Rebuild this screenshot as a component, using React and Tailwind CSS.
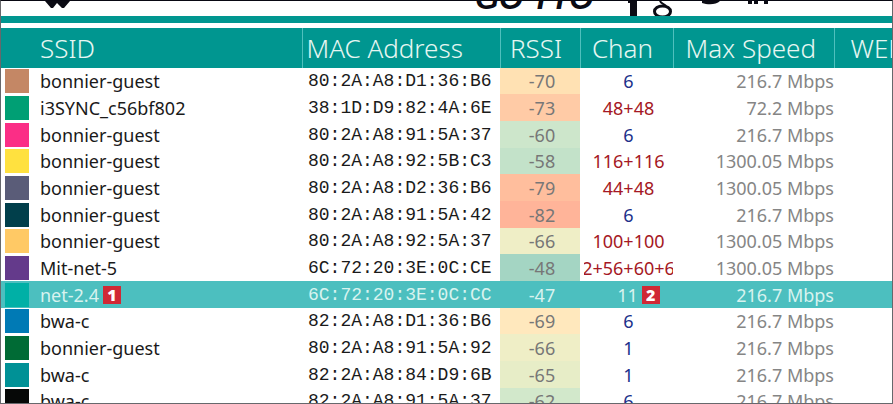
const SANS = "font-['Noto_Sans','Open_Sans',sans-serif]";

const rows = [
  { id: 1, name: "bonnier-guest", swatch: "bg-[#c48765]", mac: "80:2A:A8:D1:36:B6", rssi: -70, heat: "bg-[#ffe1b3]", chan: "6", speed: "216.7 Mbps" },
  { id: 2, name: "i3SYNC_c56bf802", swatch: "bg-[#009f74]", mac: "38:1D:D9:82:4A:6E", rssi: -73, heat: "bg-[#ffcba6]", chan: "48+48", speed: "72.2 Mbps" },
  { id: 3, name: "bonnier-guest", swatch: "bg-[#fb2e86]", mac: "80:2A:A8:91:5A:37", rssi: -60, heat: "bg-[#cde6cb]", chan: "6", speed: "216.7 Mbps" },
  { id: 4, name: "bonnier-guest", swatch: "bg-[#ffe13f]", mac: "80:2A:A8:92:5B:C3", rssi: -58, heat: "bg-[#c3e2c9]", chan: "116+116", speed: "1300.05 Mbps" },
  { id: 5, name: "bonnier-guest", swatch: "bg-[#5a5c78]", mac: "80:2A:A8:D2:36:B6", rssi: -79, heat: "bg-[#ffbe9d]", chan: "44+48", speed: "1300.05 Mbps" },
  { id: 6, name: "bonnier-guest", swatch: "bg-[#013f4b]", mac: "80:2A:A8:91:5A:42", rssi: -82, heat: "bg-[#ffb499]", chan: "6", speed: "216.7 Mbps" },
  { id: 7, name: "bonnier-guest", swatch: "bg-[#ffc965]", mac: "80:2A:A8:92:5A:37", rssi: -66, heat: "bg-[#efeec6]", chan: "100+100", speed: "1300.05 Mbps" },
  { id: 8, name: "Mit-net-5", swatch: "bg-[#643a8b]", mac: "6C:72:20:3E:0C:CE", rssi: -48, heat: "bg-[#a4d5c3]", chan: "52+56+60+64", speed: "1300.05 Mbps" },
  { id: 9, name: "net-2.4", swatch: "bg-[#00b0a6]", mac: "6C:72:20:3E:0C:CC", rssi: -47, heat: "", chan: "11", speed: "216.7 Mbps", selected: true },
  { id: 10, name: "bwa-c", swatch: "bg-[#007ab5]", mac: "82:2A:A8:D1:36:B6", rssi: -69, heat: "bg-[#ffe8bd]", chan: "6", speed: "216.7 Mbps" },
  { id: 11, name: "bonnier-guest", swatch: "bg-[#006b35]", mac: "80:2A:A8:91:5A:92", rssi: -66, heat: "bg-[#efeec6]", chan: "1", speed: "216.7 Mbps" },
  { id: 12, name: "bwa-c", swatch: "bg-[#009196]", mac: "82:2A:A8:84:D9:6B", rssi: -65, heat: "bg-[#e7edc7]", chan: "1", speed: "216.7 Mbps" },
  { id: 13, name: "bwa-c", swatch: "bg-[#060807]", mac: "82:2A:A8:91:5A:37", rssi: -62, heat: "bg-[#d2e8cb]", chan: "6", speed: "216.7 Mbps" },
];

function Marker({ children }) {
  return (
    <span className="flex h-[18px] w-[18px] shrink-0 items-center justify-center bg-[#d02835] font-['Open_Sans',sans-serif] text-base leading-none font-extrabold text-white">
      {children}
    </span>
  );
}

/* Lower edge of the banner: logo tip, title and the share icons. */
function Banner() {
  return (
    <header className="flex h-[15px] items-end overflow-hidden text-[#0b0b14]">
      <svg className="ml-11 h-[15px] w-[26px] shrink-0" viewBox="0 0 26 15" fill="currentColor" aria-hidden="true">
        <path d="M0 0H25L19 7H17L12 2L8 7H6Z" />
      </svg>
      <span className="mb-0.5 ml-[404px] shrink-0 font-['Liberation_Sans',sans-serif] text-[31px] leading-none font-bold whitespace-nowrap italic">
        GO TTO
      </span>
      <svg className="ml-[35px] h-[15px] w-[144px] shrink-0" viewBox="0 0 144 15" fill="currentColor" aria-hidden="true">
        <path d="M0 0H9V15H2V2H0Z" />
        <path d="M32 0C33 3 37 3 38 5" fill="none" stroke="currentColor" strokeWidth="2" />
        <ellipse cx="34.5" cy="10.5" rx="8" ry="5.5" fill="none" stroke="currentColor" strokeWidth="3" />
        <path d="M74 0H92C88 4 80 4 74 2Z" />
        <path d="M120 0H124V3H120ZM126 0H130V3H126ZM136 0H140V3H136Z" />
      </svg>
    </header>
  );
}

function NetworkRow({ row }) {
  const on = row.selected;
  const chanColor = on ? "text-[#d8f3ef]" : row.chan.includes("+") ? "text-[#a51824]" : "text-[#20308a]";
  return (
    <tr className={`h-[27px] text-lg leading-[26px] nth-[3n+1]:h-[26px] ${on ? "bg-[#4cbfbf] text-[#d8f3ef]" : "text-[#1a1a1a]"}`}>
      <td className="p-0">
        <span className={`ml-1 block h-6 w-6 ${row.swatch}`} />
      </td>
      <td className="p-0">
        <div className="flex items-center gap-1">
          {row.name}
          {on && <Marker>1</Marker>}
        </div>
      </td>
      <td className="p-0 pl-1.5 font-['Liberation_Mono',monospace]">{row.mac}</td>
      <td className={`p-0 pl-1 text-center ${row.heat} ${on ? "" : "text-[#777]"}`}>{row.rssi}</td>
      <td className={`p-0 pl-1 ${chanColor}`}>
        <div className="flex justify-center overflow-hidden">
          {on ? (
            <div className="flex items-center gap-1 pl-5">
              {row.chan}
              <Marker>2</Marker>
            </div>
          ) : (
            <span className="whitespace-nowrap">{row.chan}</span>
          )}
        </div>
      </td>
      <td className={`p-0 text-right ${on ? "" : "text-[#858585]"}`}>{row.speed}</td>
      <td className="p-0" />
    </tr>
  );
}

export default function App() {
  return (
    <main className={`h-screen overflow-hidden border border-[#66686c] border-t-[#080812] bg-white ${SANS}`}>
      <Banner />
      <div className="h-[7px] bg-[#009690]" />
      <div className="h-[5px]" />
      <table className="w-full table-fixed border-collapse">
        <colgroup>
          <col className="w-[39px]" />
          <col className="w-[262px]" />
          <col className="w-[198px]" />
          <col className="w-20" />
          <col className="w-[93px]" />
          <col className="w-[161px]" />
          <col />
        </colgroup>
        <thead>
          <tr className="h-10 bg-[#009690] text-left text-[26px] leading-9 text-[#e6f6f2] [&>th]:p-0 [&>th]:font-light [&>th]:whitespace-nowrap">
            <th />
            <th>SSID</th>
            <th className="border-l border-[#4fc0bd]"><span className="pl-1">MAC Address</span></th>
            <th className="border-l border-[#4fc0bd] text-center"><span className="pr-2">RSSI</span></th>
            <th className="border-l border-[#4fc0bd] text-center"><span className="pr-2">Chan</span></th>
            <th className="border-l border-[#4fc0bd]"><span className="pl-3">Max Speed</span></th>
            <th className="overflow-hidden border-l border-[#4fc0bd]"><span className="pl-4">WEP</span></th>
          </tr>
        </thead>
        <tbody>
          {rows.map((row) => (
            <NetworkRow key={row.id} row={row} />
          ))}
        </tbody>
      </table>
    </main>
  );
}
